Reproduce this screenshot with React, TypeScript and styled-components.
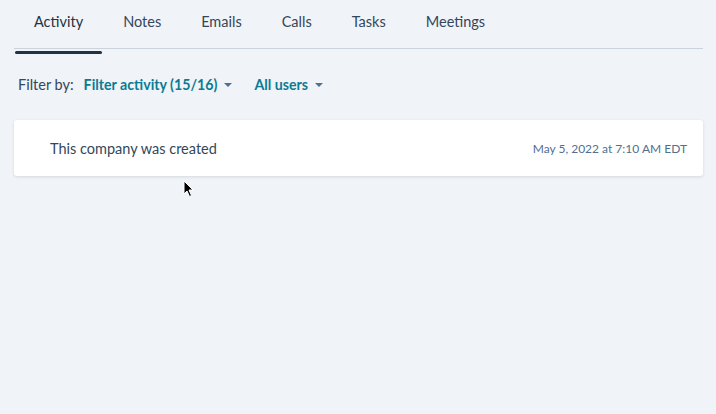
import React from "react";
import styled, { createGlobalStyle } from "styled-components";

const Global = createGlobalStyle`
  html, body { margin: 0; padding: 0; background: #f0f3f8; }
  body { font-family: Lato, "Open Sans", sans-serif; -webkit-font-smoothing: antialiased; }
`;

const Page = styled.div`
  position: relative;
  width: 716px;
  height: 414px;
  padding: 0 13px 0 14px;
  box-sizing: border-box;
`;

const TabBar = styled.div`
  display: flex;
  height: 48px;
  border-bottom: 1px solid #cad2db;
`;

const Tab = styled.div<{ $active?: boolean }>`
  position: relative;
  display: flex;
  align-items: center;
  padding: 0 20px 6px;
  height: 42px;
  font-size: 14.5px;
  color: ${(p) => (p.$active ? "#213343" : "#33475b")};
  ${(p) =>
    p.$active &&
    `&::after {
      content: "";
      position: absolute;
      left: 1px; right: 1px; bottom: -6px;
      height: 3px;
      border-radius: 2px;
      background: #213343;
    }`}
`;

const FilterRow = styled.div`
  display: flex;
  align-items: center;
  height: 20px;
  margin-top: 25px;
  padding-left: 4px;
  font-size: 14.5px;
`;

const Label = styled.span`
  color: #33475b;
  margin-right: 10px;
`;

const Dropdown = styled.span`
  display: inline-flex;
  align-items: center;
  color: #0b7b93;
  font-weight: 700;
  font-size: 14.2px;
  margin-right: 22px;
`;

const Caret = styled.span`
  display: inline-block;
  margin-left: 7px;
  width: 0;
  height: 0;
  border-left: 4.5px solid transparent;
  border-right: 4.5px solid transparent;
  border-top: 4.5px solid #516f90;
  margin-top: 2px;
`;

const Card = styled.div`
  display: flex;
  align-items: center;
  justify-content: space-between;
  height: 56px;
  margin-top: 26px;
  padding: 0 16px 0 36px;
  background: #fff;
  border-radius: 3px;
  box-shadow: 0 1px 3px rgba(45, 62, 80, 0.14);
`;

const CardText = styled.span`
  font-size: 14.5px;
  color: #33475b;
`;

const CardDate = styled.span`
  font-size: 12px;
  color: #516f90;
`;

const Cursor = styled.svg`
  position: absolute;
  left: 183px;
  top: 180px;
`;

export default function App() {
  const tabs = ["Activity", "Notes", "Emails", "Calls", "Tasks", "Meetings"];
  return (
    <Page>
      <Global />
      <TabBar>
        {tabs.map((t, i) => (
          <Tab key={t} $active={i === 0}>
            {t}
          </Tab>
        ))}
      </TabBar>
      <FilterRow>
        <Label>Filter by:</Label>
        <Dropdown>
          Filter activity (15/16)
          <Caret />
        </Dropdown>
        <Dropdown>
          All users
          <Caret />
        </Dropdown>
      </FilterRow>
      <Card>
        <CardText>This company was created</CardText>
        <CardDate>May 5, 2022 at 7:10 AM EDT</CardDate>
      </Card>
      <Cursor width="12" height="18" viewBox="0 0 12 18">
        <path
          d="M1 1 L1 14 L4 11 L6.5 16.5 L8.5 15.5 L6 10 L10 10 Z"
          fill="#000"
          stroke="#fff"
          strokeWidth="1"
          strokeLinejoin="round"
        />
      </Cursor>
    </Page>
  );
}
